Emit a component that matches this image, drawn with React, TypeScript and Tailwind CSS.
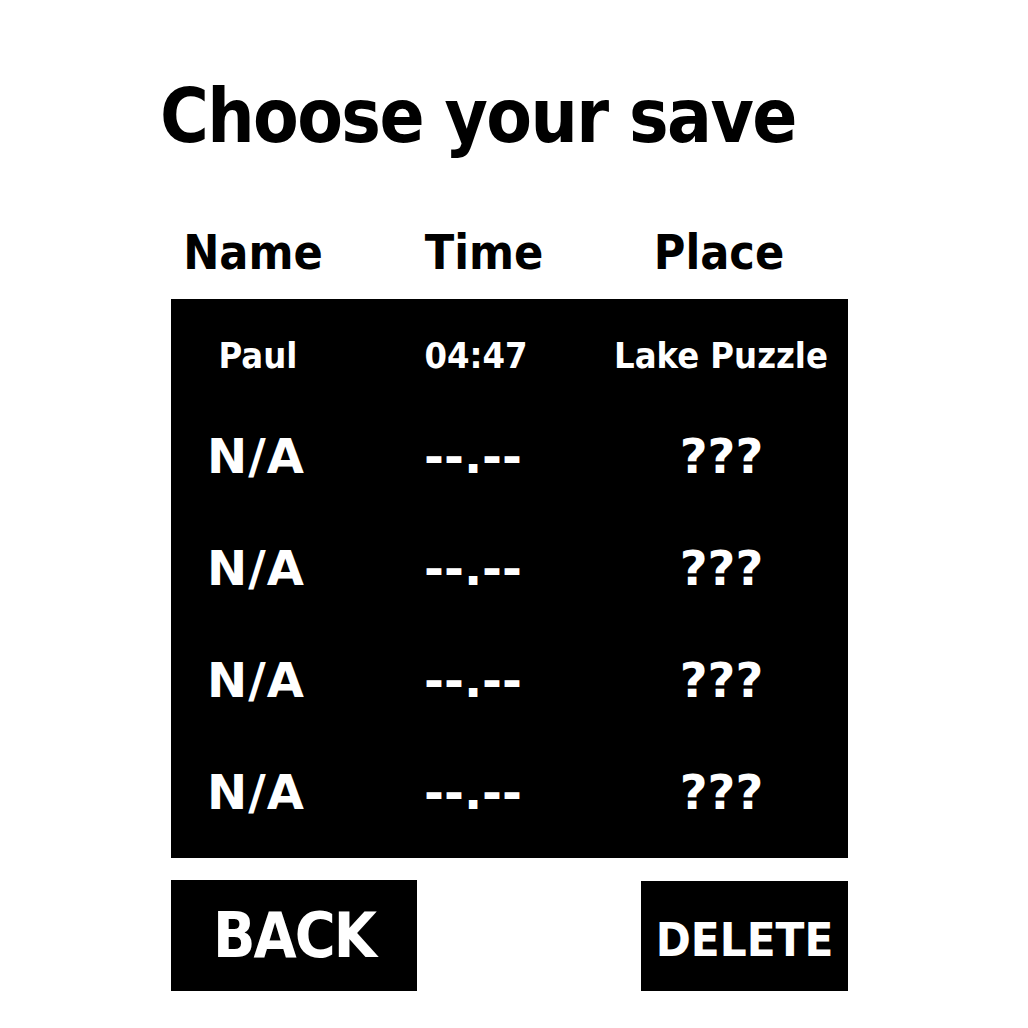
const saves = [
  { name: "N/A", time: "--.--", place: "???" },
  { name: "N/A", time: "--.--", place: "???" },
  { name: "N/A", time: "--.--", place: "???" },
  { name: "N/A", time: "--.--", place: "???" },
];

export default function App() {
  return (
    <div className="min-h-[1028px] w-[1028px] bg-white font-['DejaVu_Sans_Condensed','DejaVu_Sans',sans-serif] font-bold font-stretch-condensed text-black">
      <div className="pl-[160px] pt-[79px]">
        <h1 className="text-[74px] leading-none tracking-[-1.6px]">Choose your save</h1>
      </div>

      <div className="ml-[171px] mt-[75px] w-[677px]">
        {/* Column headers */}
        <div className="grid grid-cols-[164px_298px_172px] text-center text-[48px] leading-none">
          <div>Name</div>
          <div>Time</div>
          <div>Place</div>
        </div>

        {/* Save slots */}
        <div className="mt-[23px] flex flex-col bg-black pb-[10px] pt-[39px] text-white">
          <div className="grid h-[36px] grid-cols-[174px_262px_228px] items-center text-center text-[36px] leading-none">
            <div>Paul</div>
            <div>04:47</div>
            <div>Lake Puzzle</div>
          </div>
          <div className="mt-[26px]">
            {saves.map((s, i) => (
              <div
                key={i}
                className="grid h-[112px] grid-cols-[170px_264px_233px] items-center text-center font-['DejaVu_Sans',sans-serif] text-[48px] leading-none font-stretch-normal"
              >
                <div className="tracking-[1px]">{s.name}</div>
                <div>{s.time}</div>
                <div>{s.place}</div>
              </div>
            ))}
          </div>
        </div>

        {/* Buttons */}
        <div className="mt-[22px] flex items-start justify-between">
          <button className="flex h-[111px] w-[246px] items-center justify-center bg-black text-[62px] leading-none tracking-[-2px] text-white">
            BACK
          </button>
          <button className="mt-px flex h-[110px] w-[207px] items-center justify-center bg-black pt-[6px] text-[47px] leading-none text-white">
            DELETE
          </button>
        </div>
      </div>
    </div>
  );
}
